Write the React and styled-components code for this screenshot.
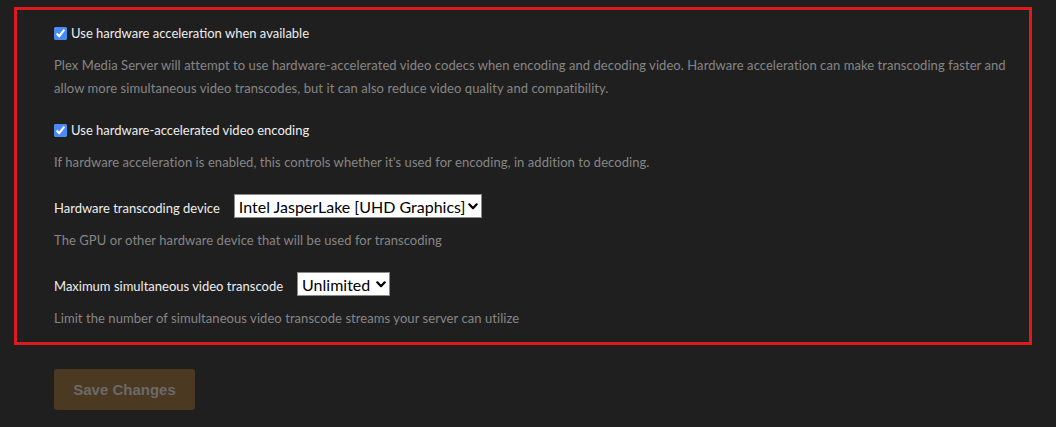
import React from "react";
import styled, { createGlobalStyle } from "styled-components";

const GlobalStyle = createGlobalStyle`
  html, body {
    margin: 0;
    padding: 0;
    background: #1f1f1f;
  }
  body {
    font-family: "Lato", "Open Sans", sans-serif;
    -webkit-font-smoothing: antialiased;
  }
`;

const Page = styled.div`
  padding: 7px 24px 0 14px;
  min-height: 420px;
  box-sizing: border-box;
`;

const Panel = styled.section`
  border: 3px solid #e0191c;
  padding: 13px 20px 12px 37px;
  display: flex;
  flex-direction: column;
  gap: 20px;
`;

const Setting = styled.div`
  display: flex;
  flex-direction: column;
  gap: 11px;
`;

const CheckRow = styled.label`
  display: flex;
  align-items: center;
  gap: 4px;
  height: 20px;
  font-size: 13px;
  color: #eeeeee;
  cursor: pointer;
`;

const Checkbox = styled.input.attrs({ type: "checkbox" })`
  margin: 0;
  width: 13px;
  height: 13px;
  accent-color: #4a8af4;
`;

const FieldRow = styled.div`
  display: flex;
  align-items: baseline;
  gap: 14px;
  height: 24px;
`;

const FieldLabel = styled.label`
  font-size: 13px;
  color: #eeeeee;
`;

const SelectWrap = styled.div`
  position: relative;
  display: flex;
  width: ${(p) => p.$w}px;
  height: ${(p) => p.$h}px;
`;

const Select = styled.select`
  appearance: none;
  -webkit-appearance: none;
  width: 100%;
  height: 100%;
  margin: 0;
  padding: 0 4px;
  border: 1px solid #8a8a8a;
  border-radius: 0;
  background: #ffffff;
  color: #000000;
  font-family: "Lato", "Open Sans", sans-serif;
  font-size: 16px;
  outline: none;
`;

const Chevron = styled.svg`
  position: absolute;
  right: 4px;
  top: 50%;
  margin-top: -3px;
  width: 10px;
  height: 7px;
  pointer-events: none;
`;

const Help = styled.p`
  margin: 0;
  font-size: 13px;
  line-height: 23px;
  letter-spacing: 0.065px;
  color: #868686;
`;

const Actions = styled.div`
  display: flex;
  padding: 24px 0 0 40px;
`;

const SaveButton = styled.button`
  width: 141px;
  height: 41px;
  border: none;
  border-radius: 3px;
  background: #4b3922;
  color: #6a6a6a;
  font-family: "Liberation Sans", Arial, sans-serif;
  font-weight: 700;
  font-size: 15px;
  cursor: default;
`;

function Dropdown({ width, height, value, options }) {
  return (
    <SelectWrap $w={width} $h={height}>
      <Select defaultValue={value}>
        {options.map((o) => (
          <option key={o}>{o}</option>
        ))}
      </Select>
      <Chevron viewBox="0 0 10 7">
        <polyline
          points="1.3,1.3 5,5.2 8.7,1.3"
          fill="none"
          stroke="#000"
          strokeWidth="2.2"
          strokeLinecap="round"
          strokeLinejoin="round"
        />
      </Chevron>
    </SelectWrap>
  );
}

export default function App() {
  return (
    <>
      <GlobalStyle />
      <Page>
        <Panel>
          <Setting>
            <CheckRow>
              <Checkbox defaultChecked />
              Use hardware acceleration when available
            </CheckRow>
            <Help>
              Plex Media Server will attempt to use hardware-accelerated video codecs when encoding and decoding video. Hardware acceleration can make transcoding faster and allow more simultaneous video transcodes, but it can also reduce video quality and compatibility.
            </Help>
          </Setting>
          <Setting>
            <CheckRow>
              <Checkbox defaultChecked />
              Use hardware-accelerated video encoding
            </CheckRow>
            <Help>
              If hardware acceleration is enabled, this controls whether it's used for encoding, in addition to decoding.
            </Help>
          </Setting>
          <Setting>
            <FieldRow>
              <FieldLabel>Hardware transcoding device</FieldLabel>
              <Dropdown
                width={248}
                height={24}
                value="Intel JasperLake [UHD Graphics]"
                options={["Auto", "Intel JasperLake [UHD Graphics]"]}
              />
            </FieldRow>
            <Help>The GPU or other hardware device that will be used for transcoding</Help>
          </Setting>
          <Setting>
            <FieldRow>
              <FieldLabel>Maximum simultaneous video transcode</FieldLabel>
              <Dropdown
                width={93}
                height={24}
                value="Unlimited"
                options={["Unlimited", "1", "2", "3", "4"]}
              />
            </FieldRow>
            <Help>Limit the number of simultaneous video transcode streams your server can utilize</Help>
          </Setting>
        </Panel>
        <Actions>
          <SaveButton disabled>Save Changes</SaveButton>
        </Actions>
      </Page>
    </>
  );
}
